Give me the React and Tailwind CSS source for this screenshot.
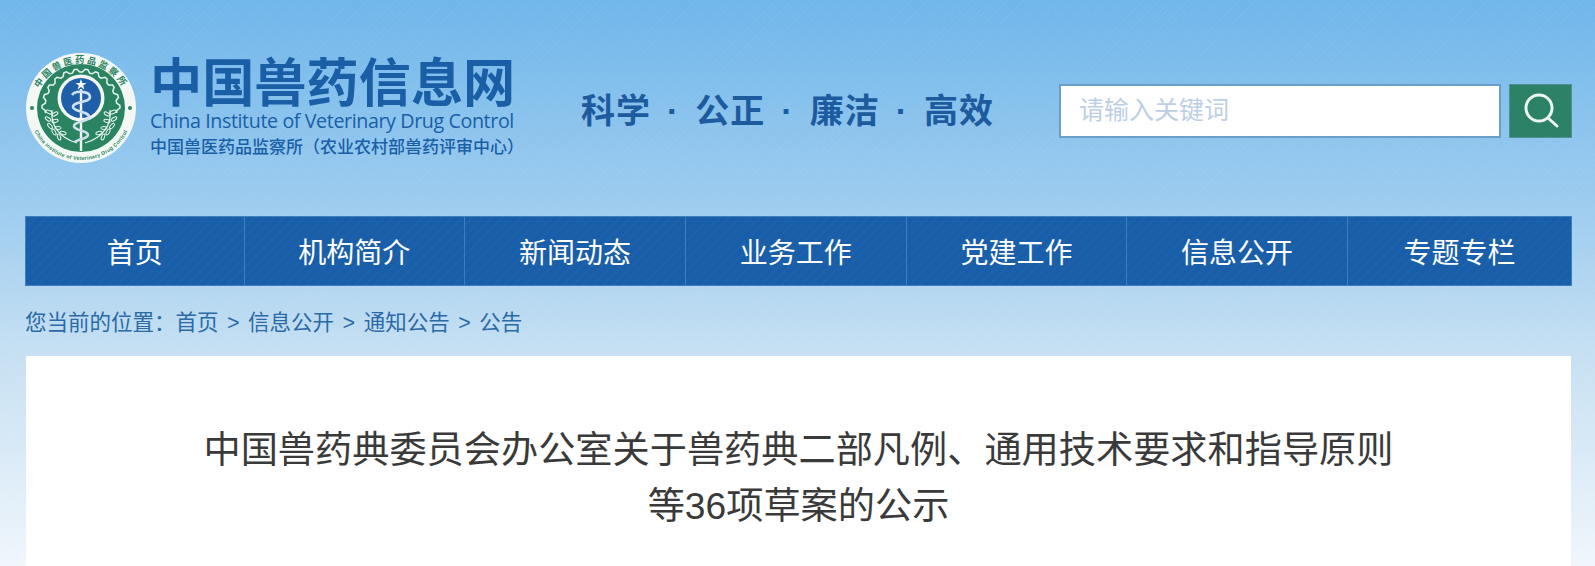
const NAV_ITEMS = ["首页", "机构简介", "新闻动态", "业务工作", "党建工作", "信息公开", "专题专栏"];
const CRUMBS = ["首页", "信息公开", "通知公告", "公告"];
const MOTTO = ["科学", "公正", "廉洁", "高效"];

const CJK = "font-['Liberation_Sans','Noto_Sans_CJK_SC',sans-serif]";
const HATCH =
  "bg-[repeating-linear-gradient(135deg,rgba(255,255,255,0.035)_0px,rgba(255,255,255,0.035)_1px,transparent_1px,transparent_4px)]";
const NAV_HATCH =
  "bg-[repeating-linear-gradient(135deg,rgba(255,255,255,0.018)_0px,rgba(255,255,255,0.018)_2px,transparent_2px,transparent_7px)]";

// gear teeth along the upper half of the green disc
function gearPath() {
  const pts = [];
  for (let a = 172; a <= 368; a += 4) {
    const r = Math.floor((a - 172) / 8) % 2 === 0 ? 36 : 39;
    const rad = (a * Math.PI) / 180;
    pts.push(`${(56 + r * Math.cos(rad)).toFixed(1)} ${(56 + r * Math.sin(rad)).toFixed(1)}`);
  }
  return "M" + pts.join(" L");
}

function Wreath({ flip }) {
  const leaves = [
    [24, 60, 20],
    [23, 67, 35],
    [25, 74, 50],
    [29, 80, 60],
    [34, 85, 70],
    [30, 62, -30],
    [30, 69, -15],
    [33, 76, 0],
    [38, 81, 15],
  ];
  return (
    <g transform={flip ? "translate(112 0) scale(-1 1)" : undefined} fill="none" stroke="#e8f3ee" strokeWidth="1">
      <path d="M27 58 C25 72 34 86 52 91" strokeWidth="1.2" />
      {leaves.map(([x, y, r]) => (
        <ellipse key={`${x}-${y}`} cx={x} cy={y} rx="3.2" ry="1.5" transform={`rotate(${r} ${x} ${y})`} />
      ))}
    </g>
  );
}

function Logo() {
  return (
    <svg width="112" height="112" viewBox="0 0 112 112" className="shrink-0 mb-[7px]">
      <defs>
        <path id="ring-top" d="M9 58 A47 47 0 1 1 103 58" />
        <path id="ring-bottom" d="M4 56 A52 52 0 0 0 108 56" />
      </defs>
      <circle cx="56" cy="56" r="55" fill="#f3f8f4" />
      <circle cx="56" cy="56" r="44" fill="#2a8462" />
      <path d={gearPath()} fill="none" stroke="#e8f3ee" strokeWidth="1.5" />
      <circle cx="56" cy="46" r="23.5" fill="#f3f8f4" />
      <circle cx="56" cy="46" r="20" fill="#1f5faa" />
      <polygon
        points="56,27 57.4,31 61.5,31 58.2,33.4 59.4,37.4 56,35 52.6,37.4 53.8,33.4 50.5,31 54.6,31"
        fill="#f3f8f4"
      />
      <Wreath />
      <Wreath flip />
      <path d="M56 37 V99" stroke="#f3f8f4" strokeWidth="2.4" />
      <path
        d="M47 43 C50 38 65 39 65 45 C65 51 48 49 48 55 C48 60 64 59 64 65 C64 70 49 69 49 74 C49 79 63 78 63 83 C63 87 52 87 50 90"
        fill="none"
        stroke="#cfe0ee"
        strokeWidth="2.6"
      />
      <circle cx="7" cy="56" r="2" fill="#2a8462" />
      <circle cx="105" cy="56" r="2" fill="#2a8462" />
      <text fontSize="9" fontWeight="700" fill="#2a8462" fontFamily="'Noto Sans CJK SC',sans-serif">
        <textPath href="#ring-top" startOffset="50%" textAnchor="middle" letterSpacing="2.4">
          中国兽医药品监察所
        </textPath>
      </text>
      <text fontSize="5.2" fontWeight="700" fill="#2a8462" fontFamily="'Liberation Sans',sans-serif">
        <textPath href="#ring-bottom" startOffset="50%" textAnchor="middle" letterSpacing="0.3">
          China Institute of Veterinary Drug Control
        </textPath>
      </text>
    </svg>
  );
}

export default function App() {
  return (
    <div
      className={`h-[566px] overflow-hidden bg-[linear-gradient(180deg,#6fb6ea_0px,#a3cff0_230px,#c4dff2_345px,#f0f6fc_566px)] ${CJK}`}
    >
      <div className={`h-full pl-[25px] pr-[23px] ${HATCH}`}>
        <header className="flex items-center h-[216px] pt-[6px]">
          <Logo />
          <div className="ml-[13px] mb-[14px] w-[372px] text-[#1a5ea6]">
            <div className="text-[52.2px] leading-[60px] font-bold whitespace-nowrap font-['Noto_Sans_CJK_SC',sans-serif]">
              中国兽药信息网
            </div>
            <div className="text-[19.7px] leading-[24px] whitespace-nowrap font-['Open_Sans',sans-serif] tracking-[-0.4px]">
              China Institute of Veterinary Drug Control
            </div>
            <div className="mt-[4px] text-[17px] leading-[22px] font-medium whitespace-nowrap">
              中国兽医药品监察所（农业农村部兽药评审中心）
            </div>
          </div>
          <div className="ml-[59px] flex items-center gap-[16px] text-[34px] font-bold tracking-[1px] text-[#1d5a9e] whitespace-nowrap">
            {MOTTO.map((word, i) => (
              <div key={word} className="flex items-center gap-[16px]">
                {i > 0 && <span>·</span>}
                <span>{word}</span>
              </div>
            ))}
          </div>
          <div className="ml-auto flex h-[54px] gap-[8px]">
            <div className="w-[442px] flex items-center bg-white border-2 border-[#6a9fcb] pl-[18px] text-[25px] text-[#bccfe6]">
              请输入关键词
            </div>
            <button
              type="button"
              className="w-[63px] flex items-center justify-center bg-[#2b8266] border border-[#4f8f96]"
            >
              <svg width="38" height="38" viewBox="0 0 38 38" fill="none" stroke="#eef6f2" strokeWidth="3" strokeLinecap="round">
                <circle cx="17" cy="16" r="13" />
                <path d="M26 26 L35 34" />
              </svg>
            </button>
          </div>
        </header>

        <div className="bg-[#185ea9]">
          <nav className={`flex h-[70px] border border-[#3f7fc0] ${NAV_HATCH}`}>
            {NAV_ITEMS.map((item, i) => (
              <a
                key={item}
                className={`flex items-center justify-center pt-[5px] text-[28px] text-white ${
                  i === 0
                    ? "w-[217.5px]"
                    : i === 6
                      ? "flex-1 border-l border-[#3f7fc0]"
                      : "w-[220.7px] border-l border-[#3f7fc0]"
                }`}
              >
                {item}
              </a>
            ))}
          </nav>
        </div>

        <div className="flex items-center h-[70px] pt-[5px] text-[21.5px] text-[#2b6aa6] whitespace-pre">
          <span>您当前的位置：</span>
          {CRUMBS.map((crumb, i) => (
            <span key={crumb} className="flex items-center">
              {i > 0 && <span className="mx-[8.5px]">&gt;</span>}
              {crumb}
            </span>
          ))}
        </div>

        <main className="mx-[1px] h-[300px] bg-white pt-[66px] text-center text-[37.2px] leading-[56px] text-[#3a3a3a]">
          <h1>
            中国兽药典委员会办公室关于兽药典二部凡例、通用技术要求和指导原则
            <br />
            等36项草案的公示
          </h1>
        </main>
      </div>
    </div>
  );
}
